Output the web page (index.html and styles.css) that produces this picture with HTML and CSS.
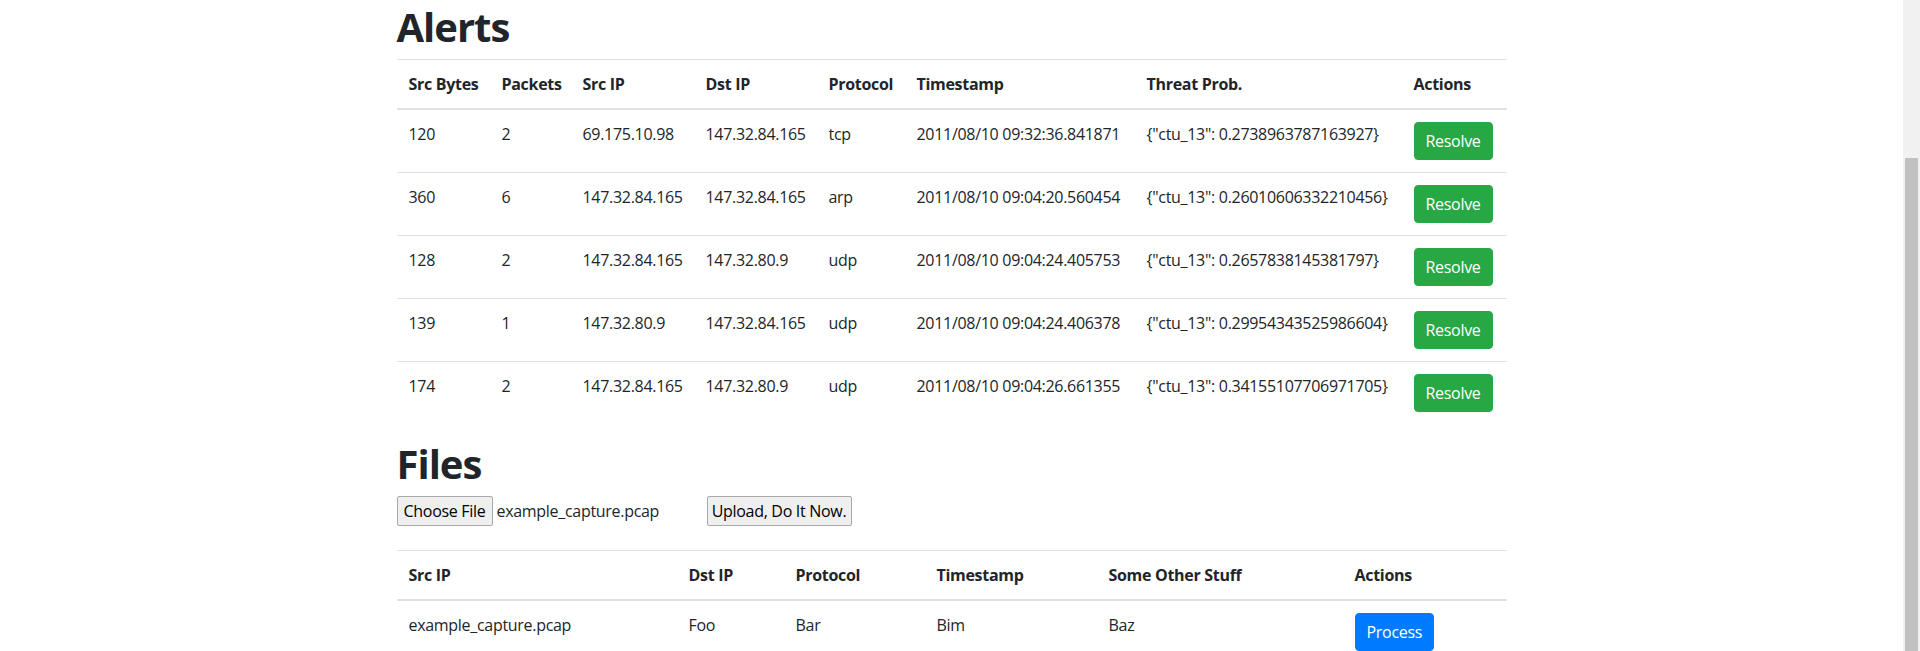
FILE: index.html
```html
<!DOCTYPE html>
<html lang="en">
<head>
<meta charset="utf-8">
<title>Alerts</title>
<link rel="stylesheet" href="styles.css">
</head>
<body>
<div class="viewport">
  <main class="page">
    <div class="container">
      <h1 class="title">Alerts</h1>
      <table class="table">
        <colgroup>
          <col class="a1"><col class="a2"><col class="a3"><col class="a4"><col class="a5"><col class="a6"><col class="a7"><col class="a8">
        </colgroup>
        <thead>
          <tr><th>Src Bytes</th><th>Packets</th><th>Src IP</th><th>Dst IP</th><th>Protocol</th><th>Timestamp</th><th>Threat Prob.</th><th>Actions</th></tr>
        </thead>
        <tbody>
          <tr><td>120</td><td>2</td><td>69.175.10.98</td><td>147.32.84.165</td><td>tcp</td><td>2011/08/10 09:32:36.841871</td><td>{"ctu_13": 0.2738963787163927}</td><td><button class="btn btn-success">Resolve</button></td></tr>
          <tr><td>360</td><td>6</td><td>147.32.84.165</td><td>147.32.84.165</td><td>arp</td><td>2011/08/10 09:04:20.560454</td><td>{"ctu_13": 0.26010606332210456}</td><td><button class="btn btn-success">Resolve</button></td></tr>
          <tr><td>128</td><td>2</td><td>147.32.84.165</td><td>147.32.80.9</td><td>udp</td><td>2011/08/10 09:04:24.405753</td><td>{"ctu_13": 0.2657838145381797}</td><td><button class="btn btn-success">Resolve</button></td></tr>
          <tr><td>139</td><td>1</td><td>147.32.80.9</td><td>147.32.84.165</td><td>udp</td><td>2011/08/10 09:04:24.406378</td><td>{"ctu_13": 0.29954343525986604}</td><td><button class="btn btn-success">Resolve</button></td></tr>
          <tr><td>174</td><td>2</td><td>147.32.84.165</td><td>147.32.80.9</td><td>udp</td><td>2011/08/10 09:04:26.661355</td><td>{"ctu_13": 0.34155107706971705}</td><td><button class="btn btn-success">Resolve</button></td></tr>
        </tbody>
      </table>

      <h1 class="title">Files</h1>
      <form class="upload">
        <span class="file-input"><button type="button" class="file-btn">Choose File</button><span class="file-name">example_capture.pcap</span></span>
        <button type="button" class="upload-btn">Upload, Do It Now.</button>
      </form>
      <table class="table">
        <colgroup>
          <col class="f1"><col class="f2"><col class="f3"><col class="f4"><col class="f5"><col class="f6">
        </colgroup>
        <thead>
          <tr><th>Src IP</th><th>Dst IP</th><th>Protocol</th><th>Timestamp</th><th>Some Other Stuff</th><th>Actions</th></tr>
        </thead>
        <tbody>
          <tr><td>example_capture.pcap</td><td>Foo</td><td>Bar</td><td>Bim</td><td>Baz</td><td><button class="btn btn-primary">Process</button></td></tr>
        </tbody>
      </table>
    </div>
  </main>
  <div class="scrollbar"><div class="thumb"></div></div>
</div>
</body>
</html>
```

FILE: styles.css
```css
html, body {
  margin: 0;
  height: 651px;
  overflow: hidden;
}

body {
  font-family: "Open Sans", "Noto Sans", sans-serif;
  font-size: 16px;
  line-height: 1.5;
  color: #212529;
  background: #fff;
  letter-spacing: -0.3px;
}

.viewport {
  display: flex;
  height: 651px;
}

.page {
  flex: 1;
  min-width: 0;
  overflow: hidden;
}

.container {
  width: 1140px;
  margin: 0 auto;
  padding: 3px 15px 0;
  box-sizing: border-box;
}

.title {
  font-size: 40px;
  line-height: 48px;
  font-weight: 700;
  margin: 0 0 8px;
  letter-spacing: -1px;
}

.table {
  width: 100%;
  border-collapse: collapse;
  table-layout: fixed;
  margin-bottom: 16px;
}

.table th,
.table td {
  padding: 12px;
  border-top: 1px solid #dee2e6;
  vertical-align: top;
  text-align: left;
  white-space: nowrap;
}

.table th {
  font-weight: 700;
}

.table thead th {
  vertical-align: bottom;
  border-bottom: 2px solid #dee2e6;
}

.a1 { width: 93px; }
.a2 { width: 81px; }
.a3 { width: 123px; }
.a4 { width: 123px; }
.a5 { width: 88px; }
.a6 { width: 230px; }
.a7 { width: 267px; }
.a8 { width: 105px; }

.f1 { width: 280px; }
.f2 { width: 107px; }
.f3 { width: 141px; }
.f4 { width: 172px; }
.f5 { width: 246px; }
.f6 { width: 164px; }

.btn {
  display: inline-block;
  font: inherit;
  letter-spacing: inherit;
  line-height: 24px;
  padding: 6px 11px;
  border: 1px solid transparent;
  border-radius: 4px;
  color: #fff;
  cursor: pointer;
}

.btn-success {
  background: #28a745;
  border-color: #28a745;
}

.btn-primary {
  background: #007bff;
  border-color: #007bff;
}

.upload {
  display: flex;
  align-items: center;
  height: 30px;
  margin: 0 0 24px;
}

.file-input {
  display: flex;
  align-items: center;
  width: 310px;
}

.file-btn,
.upload-btn {
  font: inherit;
  letter-spacing: inherit;
  line-height: 24px;
  height: 30px;
  padding: 0;
  color: #000;
  background: #efefef;
  border: 1px solid #a9a9a9;
  border-radius: 2px;
  white-space: nowrap;
  text-align: center;
}

.file-btn {
  width: 96px;
  margin-right: 4px;
}

.upload-btn {
  width: 145px;
}

.file-name {
  white-space: nowrap;
}

.scrollbar {
  width: 17px;
  flex: none;
  display: flex;
  flex-direction: column;
  background: #f1f1f1;
}

.thumb {
  flex: 1;
  margin: 158px 2px 0;
  background: #c1c1c1;
}
```
